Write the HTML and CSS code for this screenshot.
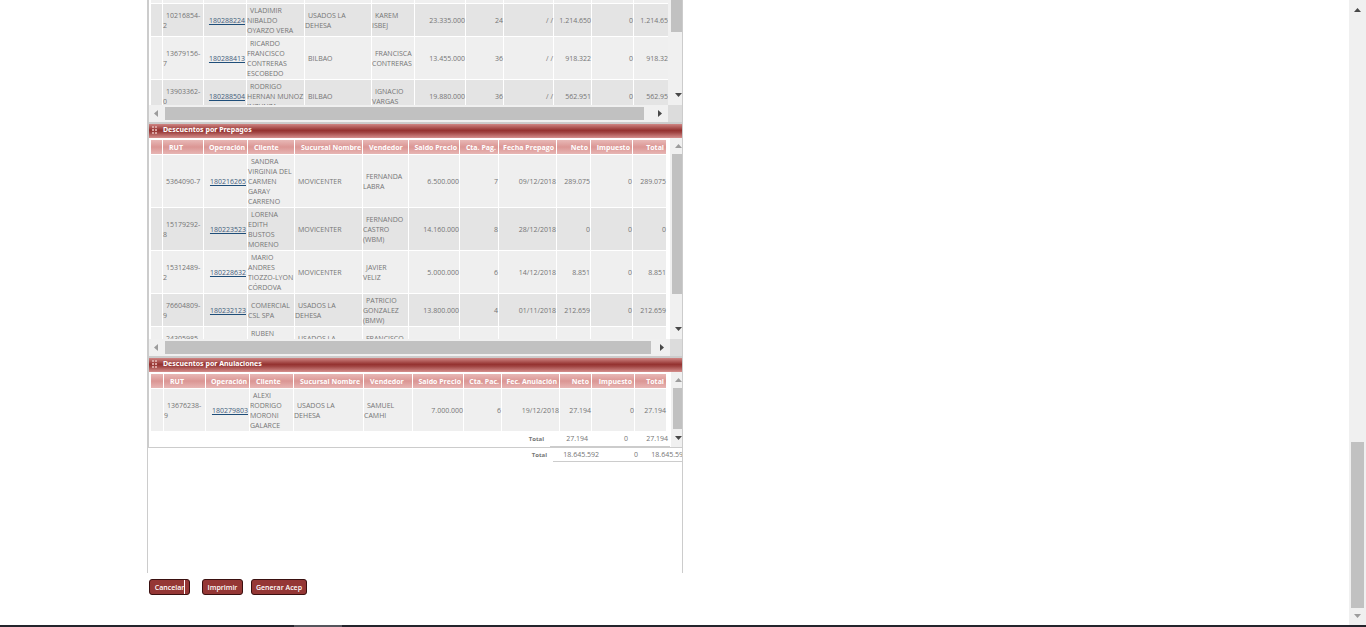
FILE: index.html
```
<!DOCTYPE html>
<html lang="es">
<head>
<meta charset="utf-8">
<title>Descuentos</title>
<link rel="stylesheet" href="styles.css">
</head>
<body>
<svg class="defs" aria-hidden="true">
  <symbol id="up" viewBox="0 0 7 4"><path d="M0 4L3.5 0L7 4Z"/></symbol>
  <symbol id="down" viewBox="0 0 7 4"><path d="M0 0H7L3.5 4Z"/></symbol>
  <symbol id="left" viewBox="0 0 4 7"><path d="M4 0V7L0 3.5Z"/></symbol>
  <symbol id="right" viewBox="0 0 4 7"><path d="M0 0V7L4 3.5Z"/></symbol>
  <symbol id="grip" viewBox="0 0 5 8"><path d="M0 0h2v2H0zM3 0h2v2H3zM0 3h2v2H0zM3 3h2v2H3zM0 6h2v2H0zM3 6h2v2H3z"/></symbol>
</svg>
<div class="screen">
<main class="page">
  <div class="frame">
    <div class="sections">
      <section class="pane pane-first">
        <div class="view">
          <table class="grid">
            <colgroup><col style="width:12px"><col style="width:41px"><col style="width:43px"><col style="width:58px"><col style="width:67px"><col style="width:43px"><col style="width:51px"><col style="width:38px"><col style="width:50px"><col style="width:38px"><col style="width:42px"><col style="width:39px"></colgroup>
            <tbody>
            <tr class="stub"><td></td><td></td><td></td><td></td><td></td><td></td><td></td><td></td><td></td><td></td><td></td><td></td></tr>
            <tr class="alt"><td></td><td>10216854-<br>2</td><td class="num"><a href="#">180288224</a></td><td>VLADIMIR<br>NIBALDO<br>OYARZO VERA</td><td>USADOS LA<br>DEHESA</td><td>KAREM<br>ISBEJ</td><td class="num">23.335.000</td><td class="num">24</td><td class="num">/ /</td><td class="num">1.214.650</td><td class="num">0</td><td class="num">1.214.650</td></tr>
            <tr><td></td><td>13679156-<br>7</td><td class="num"><a href="#">180288413</a></td><td>RICARDO<br>FRANCISCO<br>CONTRERAS<br>ESCOBEDO</td><td>BILBAO</td><td>FRANCISCA<br>CONTRERAS</td><td class="num">13.455.000</td><td class="num">36</td><td class="num">/ /</td><td class="num">918.322</td><td class="num">0</td><td class="num">918.322</td></tr>
            <tr class="alt"><td></td><td>13903362-<br>0</td><td class="num"><a href="#">180288504</a></td><td>RODRIGO<br>HERNAN MUNOZ<br>INZUNZA</td><td>BILBAO</td><td>IGNACIO<br>VARGAS</td><td class="num">19.880.000</td><td class="num">36</td><td class="num">/ /</td><td class="num">562.951</td><td class="num">0</td><td class="num">562.951</td></tr>
            </tbody>
          </table>
        </div>
        <div class="vbar"><span class="vthumb vthumb-first"></span><svg class="varrow"><use href="#down"/></svg></div>
        <div class="hbar"><svg class="harrow dim"><use href="#left"/></svg><span class="hthumb"></span><svg class="harrow"><use href="#right"/></svg></div>
        <div class="corner"></div>
      </section>

      <h2 class="title"><svg class="grip"><use href="#grip"/></svg>Descuentos por Prepagos</h2>
      <section class="pane pane-second">
        <div class="view">
          <table class="grid">
            <colgroup><col style="width:12px"><col style="width:41px"><col style="width:44px"><col style="width:47px"><col style="width:68px"><col style="width:46px"><col style="width:51px"><col style="width:39px"><col style="width:58px"><col style="width:34px"><col style="width:42px"><col style="width:34px"></colgroup>
            <thead><tr><th></th><th>RUT</th><th>Operación</th><th>Cliente</th><th>Sucursal Nombre</th><th>Vendedor</th><th class="num">Saldo Precio</th><th class="num">Cta. Pag.</th><th class="num">Fecha Prepago</th><th class="num">Neto</th><th class="num">Impuesto</th><th class="num">Total</th></tr></thead>
            <tbody>
            <tr><td></td><td>5364090-7</td><td class="num"><a href="#">180216265</a></td><td>SANDRA<br>VIRGINIA DEL<br>CARMEN<br>GARAY<br>CARRENO</td><td>MOVICENTER</td><td>FERNANDA<br>LABRA</td><td class="num">6.500.000</td><td class="num">7</td><td class="num">09/12/2018</td><td class="num">289.075</td><td class="num">0</td><td class="num">289.075</td></tr>
            <tr class="alt"><td></td><td>15179292-<br>8</td><td class="num"><a href="#">180223523</a></td><td>LORENA<br>EDITH<br>BUSTOS<br>MORENO</td><td>MOVICENTER</td><td>FERNANDO<br>CASTRO<br>(WBM)</td><td class="num">14.160.000</td><td class="num">8</td><td class="num">28/12/2018</td><td class="num">0</td><td class="num">0</td><td class="num">0</td></tr>
            <tr><td></td><td>15312489-<br>2</td><td class="num"><a href="#">180228632</a></td><td>MARIO<br>ANDRES<br>TIOZZO-LYON<br>CÓRDOVA</td><td>MOVICENTER</td><td>JAVIER<br>VELIZ</td><td class="num">5.000.000</td><td class="num">6</td><td class="num">14/12/2018</td><td class="num">8.851</td><td class="num">0</td><td class="num">8.851</td></tr>
            <tr class="alt"><td></td><td>76604809-<br>9</td><td class="num"><a href="#">180232123</a></td><td>COMERCIAL<br>CSL SPA</td><td>USADOS LA<br>DEHESA</td><td>PATRICIO<br>GONZALEZ<br>(BMW)</td><td class="num">13.800.000</td><td class="num">4</td><td class="num">01/11/2018</td><td class="num">212.659</td><td class="num">0</td><td class="num">212.659</td></tr>
            <tr><td></td><td>24305985-<br>1</td><td></td><td>RUBEN<br>&nbsp;<br>&nbsp;</td><td>USADOS LA<br>DEHESA</td><td>FRANCISCO<br>&nbsp;</td><td></td><td></td><td></td><td></td><td></td><td></td></tr>
            </tbody>
          </table>
        </div>
        <div class="vbar"><svg class="varrow dim"><use href="#up"/></svg><span class="vthumb vthumb-second"></span><svg class="varrow"><use href="#down"/></svg></div>
        <div class="hbar"><svg class="harrow dim"><use href="#left"/></svg><span class="hthumb"></span><svg class="harrow"><use href="#right"/></svg></div>
        <div class="corner"></div>
      </section>

      <h2 class="title"><svg class="grip"><use href="#grip"/></svg>Descuentos por Anulaciones</h2>
      <section class="pane pane-third">
        <div class="view">
          <table class="grid">
            <colgroup><col style="width:13px"><col style="width:42px"><col style="width:44px"><col style="width:44px"><col style="width:70px"><col style="width:49px"><col style="width:51px"><col style="width:38px"><col style="width:58px"><col style="width:32px"><col style="width:43px"><col style="width:32px"></colgroup>
            <thead><tr><th></th><th>RUT</th><th>Operación</th><th>Cliente</th><th>Sucursal Nombre</th><th>Vendedor</th><th class="num">Saldo Precio</th><th class="num">Cta. Pac.</th><th class="num">Fec. Anulación</th><th class="num">Neto</th><th class="num">Impuesto</th><th class="num">Total</th></tr></thead>
            <tbody>
            <tr><td></td><td>13676238-<br>9</td><td class="num"><a href="#">180279803</a></td><td>ALEXI<br>RODRIGO<br>MORONI<br>GALARCE</td><td>USADOS LA<br>DEHESA</td><td>SAMUEL<br>CAMHI</td><td class="num">7.000.000</td><td class="num">6</td><td class="num">19/12/2018</td><td class="num">27.194</td><td class="num">0</td><td class="num">27.194</td></tr>
            </tbody>
          </table>
          <table class="totals">
            <colgroup><col style="width:401px"><col style="width:40px"><col style="width:40px"><col style="width:40px"></colgroup>
            <tr><th>Total</th><td>27.194</td><td>0</td><td>27.194</td></tr>
          </table>
        </div>
        <div class="vbar"><svg class="varrow dim"><use href="#up"/></svg><span class="vthumb vthumb-third"></span><svg class="varrow"><use href="#down"/></svg></div>
      </section>
    </div>
    <div class="grand">
      <table class="totals">
        <colgroup><col style="width:404px"><col style="width:49px"><col style="width:39px"><col style="width:49px"></colgroup>
        <tr><th>Total</th><td>18.645.592</td><td>0</td><td>18.645.592</td></tr>
      </table>
    </div>
  </div>
  <div class="actions">
    <button type="button" class="btn btn-cancel">Cancelar</button>
    <button type="button" class="btn btn-print">Imprimir</button>
    <button type="button" class="btn btn-send">Generar Acep</button>
  </div>
</main>
<div class="pagebar"><svg class="varrow"><use href="#up"/></svg><span class="pagethumb"></span><svg class="varrow dim"><use href="#down"/></svg></div>
</div>
<footer class="taskbar"><span></span></footer>
</body>
</html>
```
FILE: styles.css
```
* { box-sizing: border-box; }
body {
  margin: 0;
  min-height: 100vh;
  display: flex;
  flex-direction: column;
  background: #fff;
  color: #757575;
  font: 7px/10px "Open Sans", "Noto Sans", sans-serif;
}
.defs { display: none; }
.screen { flex: 1; display: flex; }
.page { flex: 1; padding-left: 147px; }
.frame {
  width: 536px;
  height: 573px;
  border: 1px solid #ccc;
  border-width: 0 1px;
}
.sections { border: 1px solid #ccc; border-width: 0 0 1px 1px; }

/* scrolling panes */
.pane { display: grid; }
.pane-first { grid-template: 105px 17px / 1fr 14px; border-bottom: 2px solid #ccc; }
.pane-second { grid-template: 201px 17px / 1fr 12px; border-bottom: 2px solid #ccc; }
.pane-third { grid-template: 75px / 1fr 11px; }
.view { overflow: hidden; min-width: 0; }
.pane-second .view, .pane-third .view { padding-top: 2px; }

.grid {
  margin-left: 2px;
  width: 0;
  table-layout: fixed;
  border-spacing: 0;
}
.grid td, .grid th {
  border: 1px solid #fff;
  border-width: 0 1px 1px 0;
  text-align: left;
  white-space: nowrap;
}
.grid td { padding: 2px 0 0; background: #efefef; text-indent: 3px; }
.grid .alt td { background: #e4e4e4; }
.grid .stub td { padding: 0; height: 4px; }
.grid th {
  padding: 3px 2px 1px 6px;
  background: linear-gradient(#e8b8b6, #db9694 50%, #e7b5b3);
  color: #fff;
}
.grid .num { text-align: right; text-indent: 0; }
.grid th.num { padding-left: 0; }
.grid th:nth-child(2), .grid th:nth-child(3) { padding-right: 0; }
.grid th:nth-child(3) { padding-left: 5px; }
.grid td:nth-child(3) { padding-right: 1px; }
.grid a { color: #45617d; text-decoration: underline; text-decoration-color: #1f4e79; }

.title {
  display: flex;
  align-items: center;
  gap: 6px;
  margin: 0;
  padding: 0 3px 2px;
  height: 14px;
  color: #fff;
  font: bold 7px/10px "Noto Sans", "Open Sans", sans-serif;
  background: linear-gradient(#cf8583, #943230 45%, #a04442 60%, #d58f8d);
}
.grip { width: 5px; height: 8px; fill: #d9a3a1; }

.totals { width: 0; table-layout: fixed; border-spacing: 0; text-align: right; }
.totals th { padding: 1px 6px 2px 0; font-size: 6px; }
.totals td { padding: 2px 2px 2px 0; border-bottom: 1px solid #ccc; }
.grand { overflow: hidden; padding-left: 1px; }
.grand .totals td { padding: 2px 3px 1px 0; }

/* scroll bars */
.vbar, .hbar, .pagebar { display: flex; align-items: center; background: #f0f0f0; }
.vbar { flex-direction: column; align-items: flex-end; justify-content: space-between; overflow: hidden; }
.varrow { width: 7px; height: 4px; margin: 6px 0 8px; fill: #484848; flex: none; }
.harrow { width: 4px; height: 7px; margin: 0 6px; fill: #484848; }
.harrow.dim { margin: 0 7px 0 5px; }
.dim { fill: #9c9c9c; }
.vthumb { width: 10px; background: #c1c1c1; }
.vthumb-first { width: 11px; height: 32px; }
.vthumb-second { height: 140px; margin-bottom: auto; }
.vthumb-third { width: 9px; height: 41px; margin-bottom: auto; }
.vbar .varrow.dim { margin-bottom: 6px; }
.pane-third .varrow { margin-bottom: 7px; }
.hthumb { flex: 1; height: 13px; margin-right: 8px; background: #c1c1c1; }
.pane-second .hthumb { margin-right: 3px; }
.corner { background: #dcdcdc; }
.pagebar { width: 17px; flex-direction: column; }
.pagethumb { width: 13px; height: 166px; margin-top: auto; background: #c1c1c1; }
.pagebar .varrow { margin: 8px 0 7px; }
.pagebar .varrow.dim { margin: 6px 0 7px; }

.actions { display: flex; padding: 6px 2px; }
.btn {
  height: 16px;
  padding: 1px 0 0;
  border: 1px solid #3a1010;
  border-radius: 3px;
  background: #953735;
  color: #fff;
  font: 600 7px/10px "Open Sans", "Noto Sans", sans-serif;
}
.btn-cancel { width: 41px; margin-right: 12px; background: linear-gradient(#fff, #fff) 34px 0 / 1px 100% no-repeat #953735; }
.btn-print { width: 41px; margin-right: 8px; }
.btn-send { width: 56px; }

.taskbar { height: 2px; background: #24242c; }
.taskbar span { display: block; width: 48px; height: 2px; margin-left: 294px; background: #55555c; }
```
